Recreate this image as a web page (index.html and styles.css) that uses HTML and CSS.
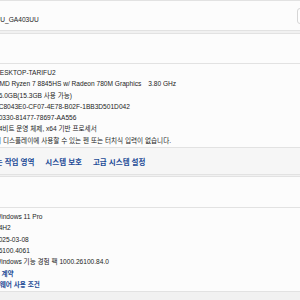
FILE: index.html
```html
<!DOCTYPE html>
<html lang="ko">
<head>
    <meta charset="UTF-8">
    <meta name="viewport" content="width=device-width, initial-scale=1.0">
    <title>정보</title>
    <link rel="stylesheet" href="styles.css">
</head>
<body>

    <div class="page">
        <section class="card head">
            <div class="model">GA403UU_GA403UU</div>
            <button class="rename">이름 바꾸기</button>
        </section>

        <section class="card expander">
            <div class="exp-title">장치 사양</div>
        </section>
        <section class="card specs">
            <div class="row"><span class="label">장치 이름</span><span class="value">DESKTOP-TARIFU2</span></div>
            <div class="row"><span class="label">프로세서</span><span class="value">AMD Ryzen 7 8845HS w/ Radeon 780M Graphics<span class="clock">3.80 GHz</span></span></div>
            <div class="row"><span class="label">설치된 RAM</span><span class="value">16.0GB(15.3GB 사용 가능)</span></div>
            <div class="row"><span class="label">장치 ID</span><span class="value">5C8043E0-CF07-4E78-B02F-1BB3D501D042</span></div>
            <div class="row"><span class="label">제품 ID</span><span class="value">00330-81477-78697-AA556</span></div>
            <div class="row"><span class="label">시스템 종류</span><span class="value">64비트 운영 체제, x64 기반 프로세서</span></div>
            <div class="row"><span class="label">펜 및 터치</span><span class="value">이 디스플레이에 사용할 수 있는 펜 또는 터치식 입력이 없습니다.</span></div>
        </section>
        <section class="card related">
            <span class="related-title">관련 링크</span>
            <a class="link" href="#">도메인 또는 작업 영역</a>
            <a class="link" href="#">시스템 보호</a>
            <a class="link" href="#">고급 시스템 설정</a>
        </section>

        <section class="card expander win">
            <div class="exp-title">Windows 사양</div>
        </section>
        <section class="card specs">
            <div class="row"><span class="label">에디션</span><span class="value">Windows 11 Pro</span></div>
            <div class="row"><span class="label">버전</span><span class="value">24H2</span></div>
            <div class="row"><span class="label">설치 날짜</span><span class="value">2025-03-08</span></div>
            <div class="row"><span class="label">OS 빌드</span><span class="value">26100.4061</span></div>
            <div class="row"><span class="label">경험</span><span class="value">Windows 기능 경험 팩 1000.26100.84.0</span></div>
            <div class="row"><a class="small-link" href="#">Microsoft 서비스 계약</a></div>
            <div class="row"><a class="small-link" href="#">Microsoft 소프트웨어 사용 조건</a></div>
        </section>
    </div>

</body>
</html>
```

FILE: styles.css
```css
* {
    margin: 0;
    padding: 0;
    box-sizing: border-box;
}
body {
    background: #f1f1f1;
    font-family: "Liberation Sans", "Noto Sans CJK KR", sans-serif;
    font-size: 6.6px;
    color: #232323;
    overflow: hidden;
}
.page {
    margin-left: -160px;
    width: 520px;
}
.card {
    background: #fcfcfc;
    border: 1px solid #e2e2e2;
}
.head {
    height: 31px;
    display: flex;
    align-items: flex-start;
    margin-bottom: 2px;
}
.model {
    padding: 13px 0 0 134px;
    line-height: 11px;
}
.rename {
    margin: 7px 0 0 auto;
    width: 62px;
    height: 16px;
    background: #fdfdfd;
    border: 1px solid #d6d6d6;
    border-radius: 3px;
    font: inherit;
    color: #232323;
}
.expander {
    height: 31px;
}
.expander.win {
    height: 32px;
    margin-top: 1px;
}
.exp-title {
    padding: 10px 0 0 60px;
    line-height: 11px;
}
.specs {
    border-top: none;
    padding: 3px 0 1px;
}
.specs + .related {
    margin-top: -1px;
}
.row {
    display: grid;
    grid-template-columns: 154px auto;
    line-height: 11.3px;
    white-space: nowrap;
}
.label {
    padding-left: 60px;
}
.clock {
    margin-left: 7px;
}
.related {
    height: 28px;
    background: #f6f6f6;
    display: flex;
    align-items: center;
    gap: 11px;
}
.related-title {
    padding-left: 60px;
    width: 114px;
}
.link, .small-link {
    color: #1c4a96;
    text-decoration: none;
    font-weight: 600;
    white-space: nowrap;
}
.link {
    font-size: 7.5px;
}
.small-link {
    grid-column: 1 / 3;
    padding-left: 109px;
}
```
